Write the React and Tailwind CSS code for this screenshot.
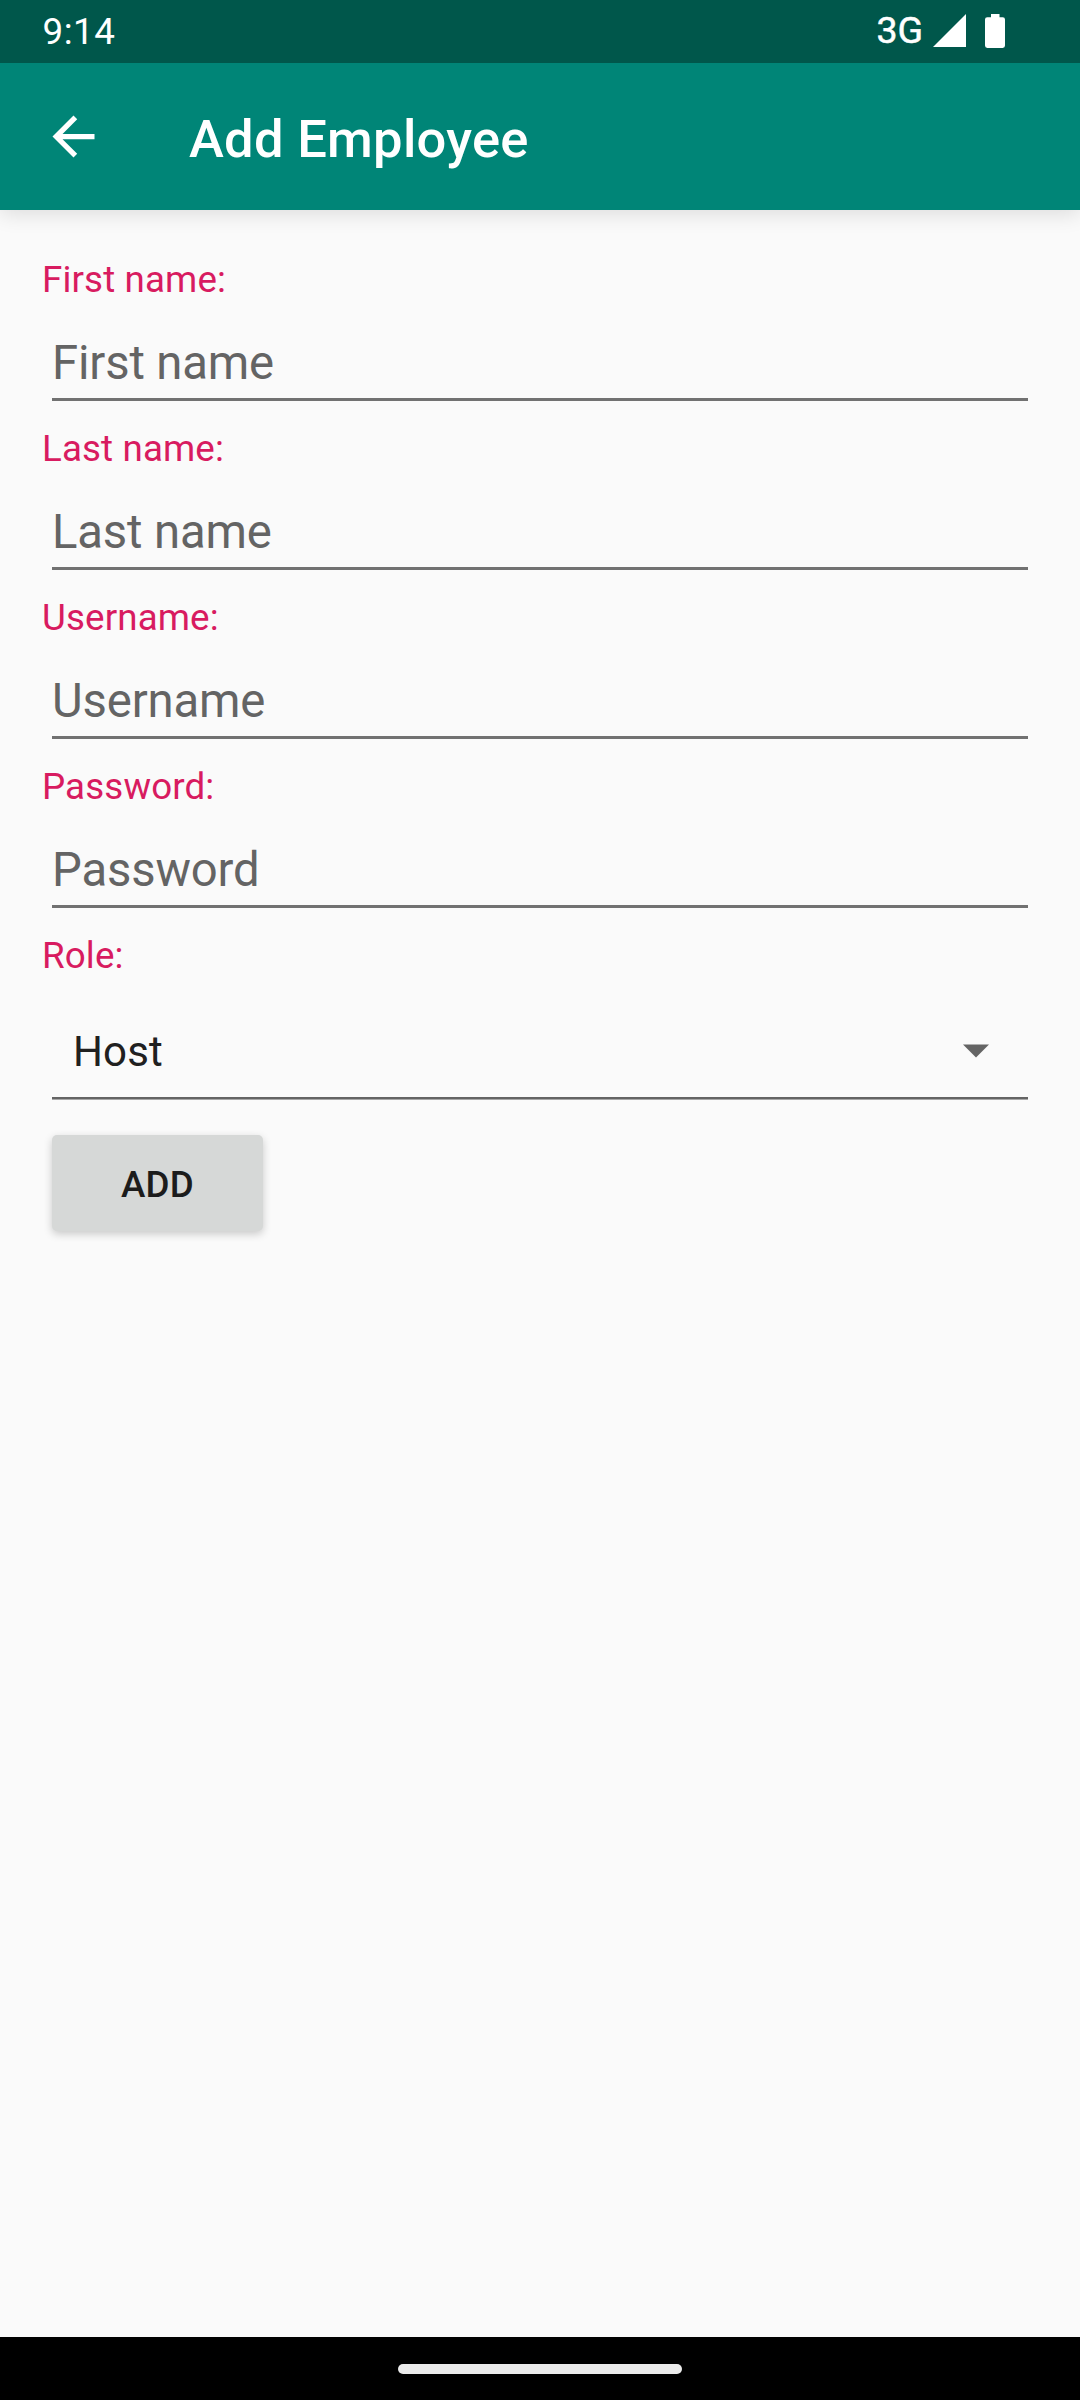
const FIELDS = ["First name", "Last name", "Username", "Password"];

function StatusBar() {
  return (
    <div className="relative z-10 flex h-[63px] shrink-0 items-start justify-between bg-[#00574b] pl-[42.5px] pr-[75px] text-white">
      <span className="pt-[10px] text-[36.75px] leading-[43px] tracking-[0.5px]">9:14</span>
      <div className="flex items-start">
        <span className="mr-[10px] pt-[9px] text-[37.5px] leading-[43px] [-webkit-text-stroke:0.5px_white]">3G</span>
        <svg className="mt-[14px] mr-[19px]" width="33" height="33" viewBox="0 0 33 33" fill="currentColor">
          <path d="M33 0V33H0z" />
        </svg>
        <svg className="mt-[14px]" width="20" height="34" viewBox="0 0 20 34" fill="currentColor">
          <path d="M6 0h8.500v3.300h3.200A2.300 2.300 0 0 1 20 5.600v26a2.300 2.300 0 0 1-2.300 2.300H2.300A2.300 2.300 0 0 1 0 31.600v-26a2.300 2.300 0 0 1 2.300-2.300H6z" />
        </svg>
      </div>
    </div>
  );
}

function AppBar() {
  return (
    <header className="relative flex h-[147px] shrink-0 items-start bg-[#008577] pl-[42px] text-white shadow-[0_4px_20px_rgba(0,0,0,0.12)]">
      <svg className="mt-[42px] mr-[84px]" width="63" height="63" viewBox="0 0 24 24" fill="currentColor">
        <path d="M20 11H7.830l5.590-5.590L12 4l-8 8 8 8 1.410-1.410L7.830 13H20z" />
      </svg>
      <h1 className="pt-[45px] text-[52.5px] leading-[62px] font-medium tracking-[0.28px]">Add Employee</h1>
    </header>
  );
}

function Label({ children }) {
  return (
    <label className="block h-[50px] pt-px text-[36.75px] leading-[50px] tracking-[0.12px] text-[#d81b60]">
      {children}
    </label>
  );
}

function Field({ name }) {
  return (
    <div className="h-[169px]">
      <Label>{name}:</Label>
      <div className="mx-[10px] h-[97px] border-b-[3px] border-[#717171] pt-[31px] text-[47.25px] leading-[56px] tracking-[-0.15px] text-[#646464]">
        {name}
      </div>
    </div>
  );
}

export default function App() {
  return (
    <div className="flex h-[2400px] w-[1080px] flex-col overflow-hidden bg-[#fafafa] font-['Roboto',sans-serif]">
      <StatusBar />
      <AppBar />
      <main className="flex-1 px-[42px] pt-[44px]">
        {FIELDS.map((name) => (
          <Field key={name} name={name} />
        ))}
        <Label>Role:</Label>
        <div className="mx-[10px] flex h-[119px] items-start justify-between border-b-2 border-[#646464] pr-[39.5px] pl-[21px] shadow-[0_1px_0_#a8a8a8]">
          <span className="pt-[47px] text-[42px] leading-[49px] tracking-[0.15px] text-[#202020]">Host</span>
          <svg className="mt-[64px]" width="26" height="14" viewBox="0 0 26 14" fill="#646464">
            <path d="M0 0.400H26L13 13.400z" />
          </svg>
        </div>
        <button className="mt-[36px] ml-[10px] flex h-[96px] w-[211px] items-center justify-center rounded-[5px] bg-[#d6d8d7] pt-[3px] text-[36.75px] leading-[43px] font-medium tracking-[0.15px] text-[#1c1c1c] shadow-[0_3px_8px_rgba(0,0,0,0.2)]">
          ADD
        </button>
      </main>
      <footer className="flex h-[63px] shrink-0 items-start justify-center bg-black pt-[27px]">
        <div className="h-[10px] w-[284px] rounded-full bg-[#ebebeb]" />
      </footer>
    </div>
  );
}
